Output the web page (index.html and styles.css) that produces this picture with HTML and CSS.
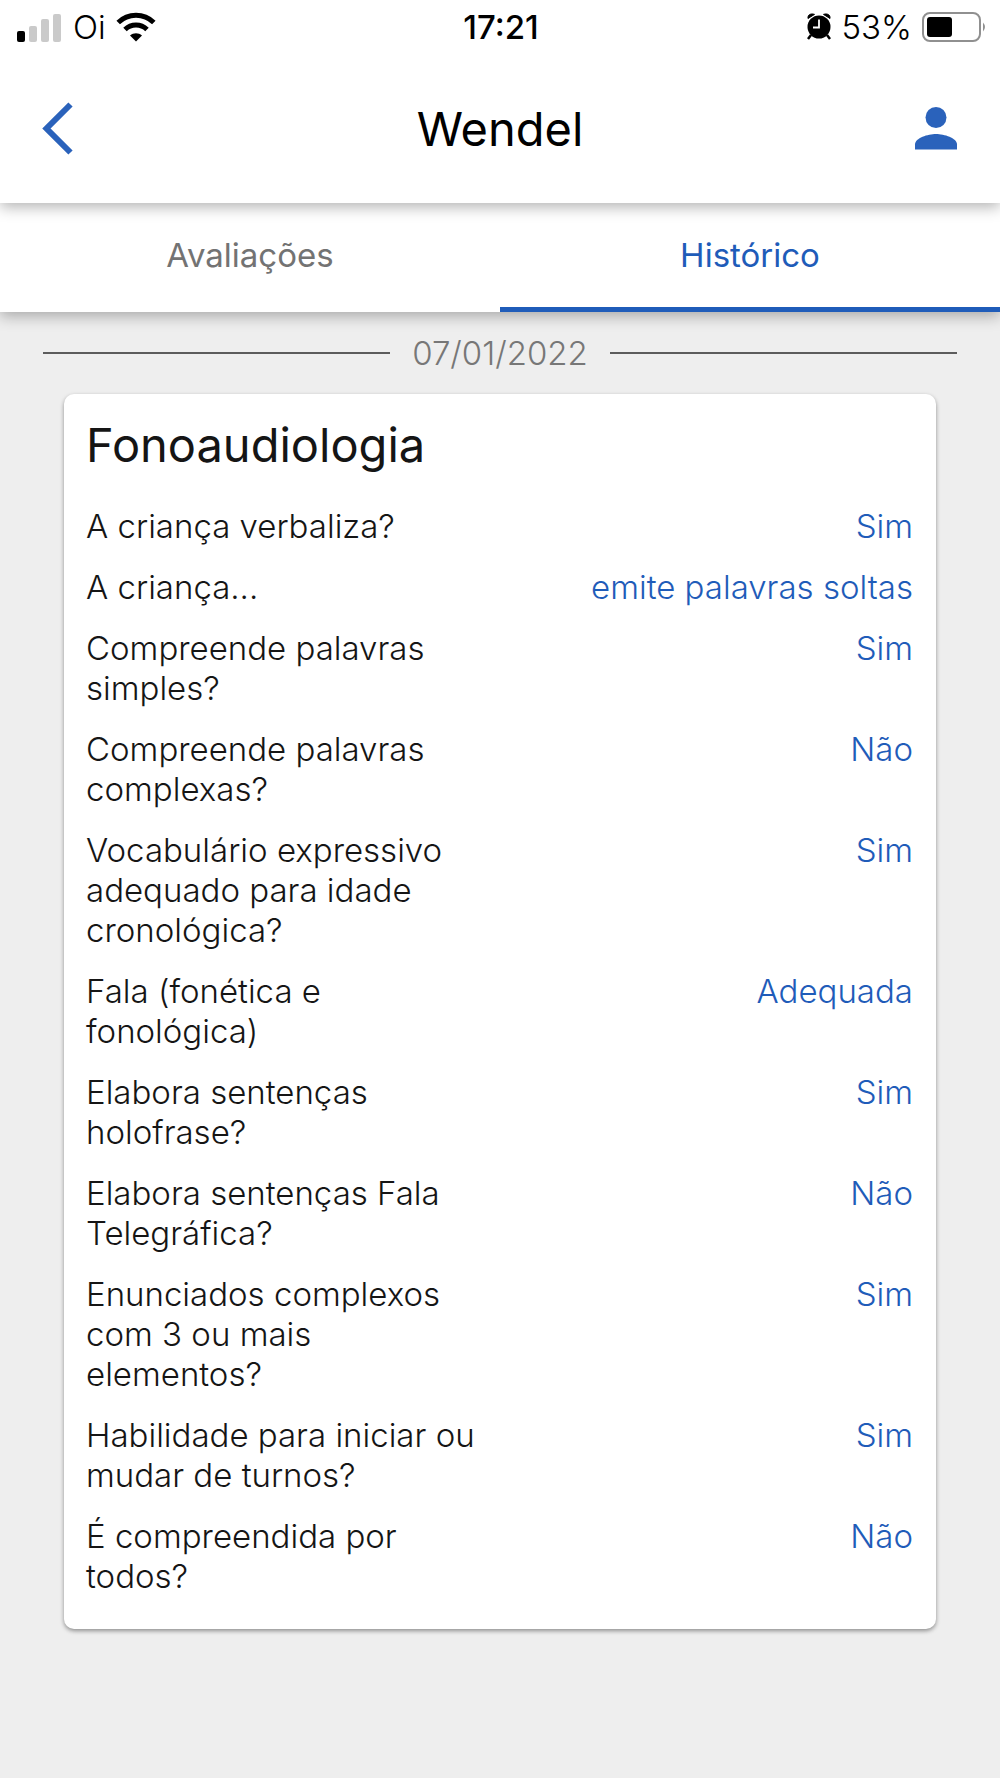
FILE: index.html
```html
<!DOCTYPE html>
<html lang="pt-BR">
<head>
  <meta charset="utf-8">
  <meta name="viewport" content="width=device-width, initial-scale=1">
  <title>Wendel - Histórico</title>
  <link rel="stylesheet" href="styles.css">
</head>
<body>
  <header class="app-header">
    <div class="status-bar">
      <div class="status-group">
        <svg class="signal" width="46" height="30" viewBox="0 0 46 30" aria-hidden="true">
          <rect x="0" y="19" width="8" height="11" rx="2"/>
          <g fill="#cacaca">
            <rect x="12" y="14" width="8" height="16" rx="2"/>
            <rect x="24" y="7" width="8" height="23" rx="2"/>
            <rect x="36" y="2" width="8" height="28" rx="2"/>
          </g>
        </svg>
        <span>Oi</span>
        <svg class="wifi" width="40" height="30" viewBox="0 0 40 30" aria-hidden="true">
          <g fill="none" stroke="#000" stroke-width="5">
            <path d="M2.2 10.5a25.5 25.5 0 0 1 35.600 0"/>
            <path d="M9 17.500a15.800 15.800 0 0 1 22 0"/>
          </g>
          <path d="M20 29.500l-6-6c3.500-3 8.500-3 12 0z"/>
        </svg>
      </div>
      <span class="clock">17:21</span>
      <div class="status-group status-end">
        <svg class="alarm" width="26" height="28" viewBox="0 0 26 28" aria-hidden="true">
          <circle cx="13" cy="14" r="11.500"/>
          <path d="M2 5.500C1.500 1.500 5 .2 8.500 1.400zM24 5.500C24.500 1.500 21 .2 17.500 1.400z" stroke="#000"/>
          <path d="M5 22l-3 4M21 22l3 4" stroke="#000" stroke-width="2.500"/>
          <path d="M13 6.500v8H7" fill="none" stroke="#fff" stroke-width="1.800"/>
        </svg>
        <span>53%</span>
        <svg class="battery" width="63" height="32" viewBox="0 0 63 32" aria-hidden="true">
          <rect x="1" y="2" width="57" height="28" rx="7" fill="#fff" stroke="#909090" stroke-width="2"/>
          <rect x="5" y="6" width="25" height="20" rx="3"/>
          <path d="M61 11.500q4 4.500 0 9z" fill="#909090"/>
        </svg>
      </div>
    </div>
    <div class="title-bar">
      <button class="icon-button" type="button" aria-label="Voltar">
        <svg width="32" height="54" viewBox="0 0 32 54" aria-hidden="true">
          <path d="M28.500 2.500L4.500 26.500l24 24" fill="none" stroke="#2a62bb" stroke-width="6"/>
        </svg>
      </button>
      <h1 class="page-title">Wendel</h1>
      <button class="icon-button icon-end" type="button" aria-label="Perfil">
        <svg width="44" height="44" viewBox="0 0 44 44" aria-hidden="true">
          <circle cx="22" cy="10.500" r="10.500" fill="#2a62bb"/>
          <path d="M1 42.500v-5C1 31 14 27 22 27s21 4 21 10.500v5z" fill="#2a62bb"/>
        </svg>
      </button>
    </div>
  </header>
  <nav class="tabs">
    <a class="tab" href="#avaliacoes">Avaliações</a>
    <a class="tab tab-active" href="#historico" aria-current="page">Histórico</a>
  </nav>
  <main class="history" id="historico">
    <div class="date-divider"><time datetime="2022-01-07">07/01/2022</time></div>
    <section class="card">
      <h2 class="card-title">Fonoaudiologia</h2>
      <dl class="answers">
        <div class="answer"><dt>A criança verbaliza?</dt><dd>Sim</dd></div>
        <div class="answer"><dt>A criança...</dt><dd>emite palavras soltas</dd></div>
        <div class="answer"><dt>Compreende palavras simples?</dt><dd>Sim</dd></div>
        <div class="answer"><dt>Compreende palavras complexas?</dt><dd>Não</dd></div>
        <div class="answer"><dt>Vocabulário expressivo adequado para idade cronológica?</dt><dd>Sim</dd></div>
        <div class="answer"><dt>Fala (fonética e fonológica)</dt><dd>Adequada</dd></div>
        <div class="answer"><dt>Elabora sentenças holofrase?</dt><dd>Sim</dd></div>
        <div class="answer"><dt>Elabora sentenças Fala Telegráfica?</dt><dd>Não</dd></div>
        <div class="answer"><dt>Enunciados complexos com 3 ou mais elementos?</dt><dd>Sim</dd></div>
        <div class="answer"><dt>Habilidade para iniciar ou mudar de turnos?</dt><dd>Sim</dd></div>
        <div class="answer"><dt>É compreendida por todos?</dt><dd>Não</dd></div>
      </dl>
    </section>
  </main>
</body>
</html>
```
FILE: styles.css
```css
* {
  box-sizing: border-box;
}

body {
  margin: 0;
  min-height: 100vh;
  background: #eee;
  color: #151515;
  font-family: Inter, "Liberation Sans", sans-serif;
  font-size: 33px;
  line-height: 40px;
}

h1,
h2,
dl,
dd {
  margin: 0;
}

.app-header {
  position: relative;
  z-index: 2;
  background: #fff;
  color: #000;
  box-shadow: 0 4px 14px rgba(0, 0, 0, 0.3);
}

.status-bar {
  display: grid;
  grid-template-columns: 1fr auto 1fr;
  align-items: center;
  height: 54px;
  padding: 0 15px 0 17px;
  font-weight: 300;
}

.status-group {
  display: flex;
  align-items: center;
  gap: 10px;
}

.status-end {
  justify-content: flex-end;
}

.clock {
  font-weight: 500;
}

.title-bar {
  display: grid;
  grid-template-columns: 1fr auto 1fr;
  align-items: center;
  height: 149px;
  padding: 0 42px;
}

.page-title {
  font-size: 47px;
  font-weight: 400;
  line-height: 54px;
}

.icon-button {
  display: flex;
  justify-self: start;
  padding: 0;
  border: 0;
  background: none;
  cursor: pointer;
}

.icon-end {
  justify-self: end;
}

.tabs {
  position: relative;
  z-index: 1;
  display: flex;
  height: 109px;
  background: #fff;
  box-shadow: 0 4px 14px rgba(0, 0, 0, 0.3);
}

.tab {
  display: flex;
  flex: 1;
  align-items: center;
  justify-content: center;
  border-bottom: 5px solid transparent;
  color: #737373;
  font-weight: 400;
  text-decoration: none;
}

.tab-active {
  border-color: #1f5cb9;
  color: #1f5cb9;
}

.history {
  padding: 21px 43px;
}

.date-divider {
  display: flex;
  align-items: center;
  gap: 22px;
  margin-bottom: 21px;
  color: #777;
  font-weight: 300;
}

.date-divider::before,
.date-divider::after {
  content: "";
  flex: 1;
  height: 2px;
  background: #5c5c5c;
}

.card {
  margin: 0 21px;
  padding: 24px 23px 33px 22px;
  border-radius: 10px;
  background: #fff;
  box-shadow: 0 2px 4px rgba(0, 0, 0, 0.4);
}

.card-title {
  margin-bottom: 34px;
  font-size: 47px;
  font-weight: 400;
  line-height: 54px;
}

.answers {
  display: grid;
  gap: 21px;
  font-weight: 300;
}

.answer {
  display: grid;
  grid-template-columns: 1fr 1fr;
  column-gap: 21px;
}

.answer dd {
  color: #1f5cb9;
  text-align: right;
}
```
